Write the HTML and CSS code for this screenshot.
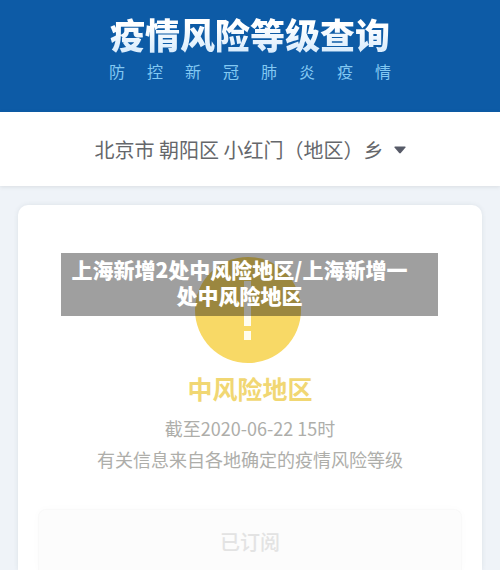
FILE: index.html
```html
<!DOCTYPE html>
<html lang="zh-CN">
<head>
<meta charset="utf-8">
<meta name="viewport" content="width=device-width, initial-scale=1">
<title>疫情风险等级查询</title>
<link rel="stylesheet" href="styles.css">
</head>
<body>
<header class="banner">
  <h1 class="banner-title">疫情风险等级查询</h1>
  <p class="banner-subtitle">防 控 新 冠 肺 炎 疫 情</p>
</header>
<div class="region">
  <div class="region-picker">
    <select class="region-select" aria-label="选择地区">
      <option>北京市 朝阳区 小红门（地区）乡</option>
    </select>
    <svg class="region-caret" viewBox="0 0 12 8" aria-hidden="true"><path d="M1 .5h10q1.200 0 .5 1L6.800 7q-.8.8-1.600 0L.5 1.500q-.7-1 .5-1z"/></svg>
  </div>
</div>
<main class="content">
  <section class="card">
    <svg class="risk-icon" viewBox="0 0 110 106" aria-hidden="true">
      <circle cx="53" cy="53" r="53" fill="#f8d966"/>
      <path d="M49 24h7v45h-7zM49 74h7v9h-7z" fill="#fffdf0"/>
    </svg>
    <h2 class="risk-level">中风险地区</h2>
    <p class="note">截至2020-06-22 15时</p>
    <p class="note">有关信息来自各地确定的疫情风险等级</p>
    <button class="subscribe" type="button">已订阅</button>
    <p class="caption">上海新增2处中风险地区/上海新增一处中风险地区</p>
  </section>
</main>
</body>
</html>
```
FILE: styles.css
```css
* {
  box-sizing: border-box;
}

body {
  display: flex;
  flex-direction: column;
  min-height: 100vh;
  margin: 0;
  background: #eff3f8;
  font-family: "Noto Sans CJK SC", "Noto Sans", sans-serif;
}

h1, h2, p {
  margin: 0;
}

.banner {
  display: flex;
  flex-direction: column;
  align-items: center;
  padding: 12px 0 28px;
  background: #0d5ba6;
}

.banner-title {
  font-size: 35px;
  line-height: 44px;
  font-weight: 900;
  color: transparent;
  background: linear-gradient(#fff 30%, #d3e9fc);
  background-clip: text;
  -webkit-background-clip: text;
}

.banner-subtitle {
  width: 282px;
  margin-top: 3px;
  margin-bottom: 1px;
  font-size: 16px;
  line-height: 24px;
  color: #82c8f2;
  text-align: justify;
  text-align-last: justify;
}

.region {
  display: flex;
  justify-content: center;
  padding: 22px 0 20px;
  background: #fff;
  box-shadow: 0 1px 4px rgba(60, 70, 70, 0.12);
}

.region-picker {
  display: flex;
  align-items: center;
  gap: 10px;
}

.region-select {
  appearance: none;
  height: 32px;
  margin: 0;
  padding: 0;
  border: 0;
  background: none;
  color: #65676b;
  font: 400 20px/32px "Noto Sans CJK SC", "Noto Sans", sans-serif;
}

.region-caret {
  width: 12px;
  height: 8px;
  fill: #575b68;
}

.content {
  flex: 1;
  display: flex;
  flex-direction: column;
  padding: 19px 18px 0;
}

.card {
  position: relative;
  flex: 1;
  display: flex;
  flex-direction: column;
  align-items: center;
  padding: 52px 20px 0;
  border-radius: 10px 10px 0 0;
  background: #fff;
  box-shadow: 0 0 5px rgba(60, 80, 90, 0.1);
}

.risk-icon {
  width: 110px;
  height: 106px;
}

.risk-level {
  margin: 7px 0;
  font-size: 25px;
  line-height: 36px;
  font-weight: 700;
  color: #f1d773;
}

.note {
  font-size: 18px;
  line-height: 31px;
  font-weight: 400;
  color: #aeaeaa;
}

.subscribe {
  width: 100%;
  height: 61px;
  margin-top: 34px;
  padding: 4px 0 0;
  border: 1px solid #f9f9f9;
  border-bottom: 0;
  border-radius: 8px 8px 0 0;
  background: #fcfcfc;
  box-shadow: 0 0 8px rgba(0, 0, 0, 0.02);
  color: #e3e3e3;
  font: 500 20px/30px "Noto Sans CJK SC", "Noto Sans", sans-serif;
}

.caption {
  position: absolute;
  top: 48px;
  left: 43px;
  right: 44px;
  padding: 3px 24px 8px 4px;
  background: rgba(0, 0, 0, 0.375);
  color: #fff;
  font-size: 21px;
  line-height: 26px;
  font-weight: 900;
  text-align: center;
  word-break: break-all;
}
```
